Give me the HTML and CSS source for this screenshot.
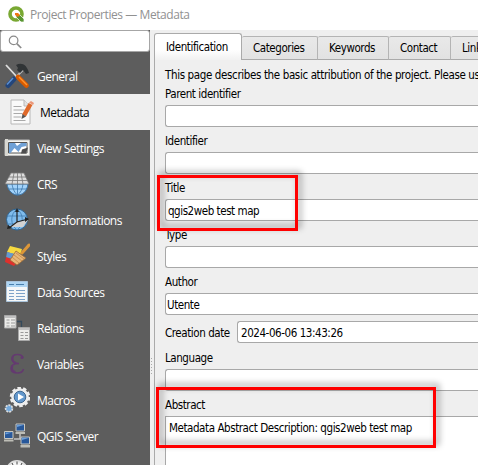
FILE: index.html
```html
<!DOCTYPE html>
<html lang="en">
<head>
<meta charset="utf-8">
<title>Project Properties — Metadata</title>
<link rel="stylesheet" href="styles.css">
</head>
<body>
<div class="window">
  <header class="titlebar">
    <svg class="logo" width="18" height="18" viewBox="0 0 18 18"><circle cx="8" cy="8" r="6" fill="none" stroke="#79a832" stroke-width="3.600"/><path d="M8 8l3 0 5 5v3h-3L8 11z" fill="#589632" stroke="#fff" stroke-width=".7"/><path d="M7 7h3l2 2-2 2-3-2z" fill="#ee7913"/></svg>
    <span class="window-title">Project Properties — Metadata</span>
  </header>
  <div class="main">
    <nav class="sidebar">
      <div class="search"><svg width="14" height="14" viewBox="0 0 14 14" fill="none" stroke="#8a8a8a"><circle cx="5.600" cy="5.400" r="4.300" stroke-width="1.200"/><path d="M8.800 8.600l4.400 4.400" stroke-width="1.700"/></svg></div>
      <div class="item">
        <svg viewBox="0 0 26 26"><path d="M2 2l11 12" stroke="#ddd" stroke-width="1.800"/><path d="M19 7L10 16" stroke="#bbb" stroke-width="2"/><path d="M12 2c6-3 11 0 13 8l-3 1-3-4-3 3-3-3 1-2z" fill="#303436"/><path d="M10 16l-6 6.500" stroke="#23467c" stroke-width="5" stroke-linecap="round"/><path d="M9 15l-6 6.500" stroke="#5d8fd0" stroke-width="1.500"/><path d="M14 14l8.500 8.500" stroke="#d95b00" stroke-width="4.600" stroke-linecap="round"/><path d="M15 14l8 8" stroke="#ff942e" stroke-width="1.500"/></svg><span>General</span>
      </div>
      <div class="item selected">
        <svg viewBox="0 0 26 26"><path d="M2 1h13l6 6v18H2z" fill="#fafafa" stroke="#b8b8b8"/><path d="M15 1v6h6" fill="#e3e3e3" stroke="#b8b8b8"/><path d="M4.500 7.500h8M4.500 11h11M4.500 14.500h9M4.500 18h8M4.500 21.500h12" stroke="#aaa"/><path d="M21.500 5L15 16.500" stroke="#df692a" stroke-width="4.500"/><path d="M20 3.500l4 2.500 1-2-3-2z" fill="#eb9678"/><path d="M13.500 15l3.500 2.500-4.500 2.500z" fill="#555"/></svg><span>Metadata</span>
      </div>
      <div class="item">
        <svg viewBox="0 0 26 26"><path d="M1 5h24.500v15.500H1z" fill="#f4f4ef" stroke="#bbb"/><path d="M1 4h3v17H1z" fill="#d8d8d2"/><path d="M4.500 7.500h18.500v10.500h-18.500z" fill="#fff" stroke="#555"/><path d="M5 8h6l2 3 4-3h5.500v3l-5 1-3 5-4-4-4 5H5z" fill="#6fa1d6"/><path d="M17 18.500l1-4 6-2-2 6z" fill="#4e4e4e"/></svg><span>View Settings</span>
      </div>
      <div class="item">
        <svg viewBox="0 0 26 26"><path d="M3 13h21c-1 8-6 11-10.500 11S4 20 3 13z" fill="#a3d3fa" stroke="#3b76ab"/><path d="M8 13c1 6 3 9 5.500 11 3-2 5-6 5.500-11M13.500 13v11M4 18h19" fill="none" stroke="#3b76ab" stroke-width=".8"/><path d="M7 2h13l5 11H1z" fill="#ddd" stroke="#777" stroke-width=".8"/><path d="M5 6h17M3 9.500h21M10 2L8 13M13.500 2v11M17 2l2 11" stroke="#777" stroke-width=".8"/></svg><span>CRS</span>
      </div>
      <div class="item">
        <svg viewBox="0 0 26 26"><circle cx="13" cy="12.500" r="10.500" fill="#80bced" stroke="#31648f"/><path d="M3 9h20M3 17h20M13 2c-7 5-7 16 0 21M13 2c7 5 7 16 0 21" fill="none" stroke="#3e7aae" stroke-width=".8"/><path d="M6 20l6-5 12-2-5 7z" fill="#d2d2d2"/><path d="M13 3v12L5 21M13 15l11-3" fill="none" stroke="#222" stroke-width="1.200"/><path d="M11 5l2-4 2 4zM4 18l-1 4 5-1zM21 10l4 2-4 3z" fill="#222"/></svg><span>Transformations</span>
      </div>
      <div class="item">
        <svg viewBox="0 0 26 26"><path d="M6 3l12 3-2 7L3 9z" fill="#f7da40"/><path d="M3 9l12 3-3 7L2 15z" fill="#6599cf"/><path d="M2 14l12 4-4 5-9-4z" fill="#df302c"/><path d="M25 2l-7 8" stroke="#dc9638" stroke-width="3" stroke-linecap="round"/><path d="M12 8l10 7-5 4-4 3-7-5z" fill="#e7b779" stroke="#9b6935" stroke-width=".8"/><path d="M12 10l8 6M10 12l8 6M8 14l7 6" stroke="#be8140" stroke-width=".7"/></svg><span>Styles</span>
      </div>
      <div class="item">
        <svg viewBox="0 0 26 26"><path d="M2.500 2.500h21v20h-21z" fill="#f5f7f8" stroke="#a9c3da"/><path d="M3 3h20v5H3z" fill="#aed5f3"/><path d="M5 5.500h5M12 5.500h8" stroke="#487fad"/><path d="M5 11.500h5M12 11.500h9M5 14.500h5M12 14.500h9M5 17.500h5M12 17.500h9M5 20.500h5M12 20.500h9" stroke="#7da2c9"/></svg><span>Data Sources</span>
      </div>
      <div class="item">
        <svg viewBox="0 0 26 26"><path d="M13 6.500h4.500V14" fill="none" stroke="#34495b" stroke-width="1.300"/><g fill="#ececea" stroke="#a8a8a8"><path d="M.5.500h11.500v12.500H.5zM14.500 12.500h11v13H14.500z"/></g><path d="M1 1h11v2H1zM15 13h10.500v2H15z" fill="#c0c0c0"/><path d="M2.500 5h3M7 5h4M2.500 8h3M7 8h4M2.500 11h3M7 11h4M16.500 17.500h3M21 17.500h3M16.500 20.500h3M21 20.500h3M16.500 23.500h3M21 23.500h3" stroke="#999"/></svg><span>Relations</span>
      </div>
      <div class="item">
        <svg viewBox="0 0 26 26"><path d="M19 7C18.500 4 16 3.500 13.500 3.500 10 3.500 8 5 8 8c0 3 3 4.500 7 4.500-5 0-8 1-8 5 0 3 3 4.500 6.500 4.500s5.500-1.500 6-4" fill="none" stroke="#643a70" stroke-width="1.500"/><path d="M9 5C7.500 9 9 11 12 12M8.500 14.500c-2 4 1 6 3 6.500" fill="none" stroke="#643a70" stroke-width="2"/><circle cx="18" cy="6.500" r="1.500" fill="#643a70"/></svg><span>Variables</span>
      </div>
      <div class="item">
        <svg viewBox="0 0 26 26"><circle cx="16" cy="10" r="7.800" fill="#eee" stroke="#eee" stroke-width="2"/><circle cx="16" cy="10" r="9" stroke="#eee" stroke-width="2.500" stroke-dasharray="3.500 2.155"/><circle cx="16" cy="10" r="5.800" fill="#6297cc" stroke="#3d6690"/><path d="M14 6.500l6 3.500-6 3.500z" fill="#fff"/><circle cx="5" cy="21.500" r="3.400" fill="#73a9dc" stroke="#ddd" stroke-width="1.700" stroke-dasharray="2 1"/></svg><span>Macros</span>
      </div>
      <div class="item">
        <svg viewBox="0 0 26 26"><path d="M16 10v6M10 16h9" stroke="#c4c4c4" stroke-width="1.500"/><g fill="#28589a" stroke="#c8c8c2"><path d="M12 1h8.500v7H12zM.5 8.500h8.500v7H.5zM17 14h8.500v7H17z"/></g><g fill="#bdbdb6"><path d="M11.500 9h9.500v2H11.500zM0 16.500h9.500v2H0zM16.500 22h9.500v2.500H16.500z"/></g><path d="M13 2h6.500L13 4zM1.500 9.500H8l-6.500 2zM18 15h6.500L18 17z" fill="#6ba0dc"/></svg><span>QGIS Server</span>
      </div>
      <div class="item last">
        <svg viewBox="0 0 26 26"><circle cx="13" cy="12" r="10" fill="#f5f5f5" stroke="#ddd" stroke-width="2"/><path d="M13 2.500v3M8 4l1 2M18 4l-1 2" stroke="#444"/></svg>
      </div>
    </nav>
    <div class="splitter"><svg width="3" height="18"><path d="M1.500 1v17" stroke="#aaa" stroke-dasharray="1 2"/></svg></div>
    <section class="panel">
      <div class="tabs">
        <div class="tab active">Identification</div><div class="tab categories">Categories</div><div class="tab keywords">Keywords</div><div class="tab contact">Contact</div><div class="tab links">Link</div>
      </div>
      <div class="page">
        <p class="intro">This page describes the basic attribution of the project. Please us</p>
        <label>Parent identifier</label><div class="field"></div>
        <label>Identifier</label><div class="field"></div>
        <label>Title</label><div class="field titled"><span>qgis2web test map</span></div>
        <label>Type</label><div class="field"></div>
        <label>Author</label><div class="field author"><span>Utente</span></div>
        <div class="date-row"><label>Creation date</label><div class="field"><span>2024-06-06 13:43:26</span></div></div>
        <label>Language</label><div class="field"></div>
        <label>Abstract</label><div class="field abstract"><span>Metadata Abstract Description: qgis2web test map</span></div>
      </div>
    </section>
  </div>
  <div class="mark mark-title"></div>
  <div class="mark mark-abstract"></div>
</div>
</body>
</html>
```
FILE: styles.css
```css
* { box-sizing: border-box; }
body { margin: 0; }
.window {
  position: relative;
  width: 478px;
  height: 465px;
  overflow: hidden;
  background: #efefef;
  font: 11.5px/14px "DejaVu Sans Condensed", "DejaVu Sans", sans-serif;
  font-stretch: condensed;
  letter-spacing: -0.43px;
  color: #000;
  white-space: nowrap;
}
.titlebar {
  height: 30px;
  padding: 0 0 0 8px;
  display: flex;
  align-items: center;
  gap: 4px;
  background: #fff;
  color: #919191;
  font: 12px/16px "Open Sans", sans-serif;
  letter-spacing: -0.43px;
}
.logo { margin-top: -1px; }
.main { display: flex; height: 435px; }
.sidebar {
  width: 150px;
  background: #5d5d5d;
  color: #fff;
  font: 12px/16px "Open Sans", sans-serif;
  letter-spacing: -0.53px;
  overflow: hidden;
}
.search {
  height: 22px;
  border: 1px solid #a6a6a6;
  border-radius: 3px;
  background: #fff;
  padding: 4px 0 0 7px;
}
.search svg { display: block; }
.item {
  height: 36px;
  padding-left: 4px;
  display: flex;
  align-items: center;
  gap: 7px;
}
.item:nth-child(2) { margin-top: 6px; }
.item svg { width: 26px; height: 26px; flex: none; fill: none; }
.item span { padding-top: 2px; }
.item.selected { background: #efefef; color: #000; padding-left: 9px; gap: 5px; }
.splitter { width: 4px; padding-top: 327px; }
.splitter svg { display: block; }
.panel { width: 324px; display: flex; flex-direction: column; }
.tabs { display: flex; align-items: flex-end; height: 27px; margin-top: 3px; flex: none; }
.tab {
  flex: none;
  height: 24px;
  padding: 4px 0 0 11px;
  border: 1px solid #b4b4b4;
  border-left-width: 0;
  border-bottom-color: #aaa;
  background: linear-gradient(#e9e9e9, #e2e2e2);
  border-radius: 2px 2px 0 0;
}
.tab.active {
  width: 88px;
  height: 27px;
  padding-top: 6px;
  border: 1px solid #aaa;
  border-bottom: 0;
  background: linear-gradient(#fff 60%, #f1f1f1);
  border-radius: 3px 3px 0 0;
}
.categories { width: 76px; }
.keywords { width: 71px; }
.contact { width: 62px; }
.links { width: 62px; }
.page {
  flex: 1;
  border-left: 1px solid #aaa;
  padding: 7px 0 0 10px;
}
.intro { margin: 0; height: 19px; line-height: 14px; padding-top: 1px; letter-spacing: -0.37px; }
label { display: block; height: 19px; line-height: 14px; padding-top: 1px; }
.field {
  height: 22px;
  margin-bottom: 6px;
  border: 1px solid #a8a8a8;
  border-right: 0;
  border-radius: 3px 0 0 3px;
  background: #fff;
  padding: 4px 0 0 2px;
}
.titled { letter-spacing: -0.45px; }
.author { padding-left: 1px; }
.date-row { display: flex; align-items: center; height: 22px; margin-bottom: 7px; }
.date-row label { width: 72px; height: 15px; }
.date-row .field { flex: 1; margin: 0; padding-left: 3px; }
.abstract { height: 60px; border-radius: 0; padding-left: 3px; padding-top: 4px; }
.mark { position: absolute; border: 3px solid #f00; filter: drop-shadow(3px -3px 3px rgba(0,0,0,.4)); }
.mark-title { left: 157px; top: 175px; width: 141px; height: 56px; }
.mark-abstract { left: 156px; top: 387px; width: 280px; height: 61px; }
```
